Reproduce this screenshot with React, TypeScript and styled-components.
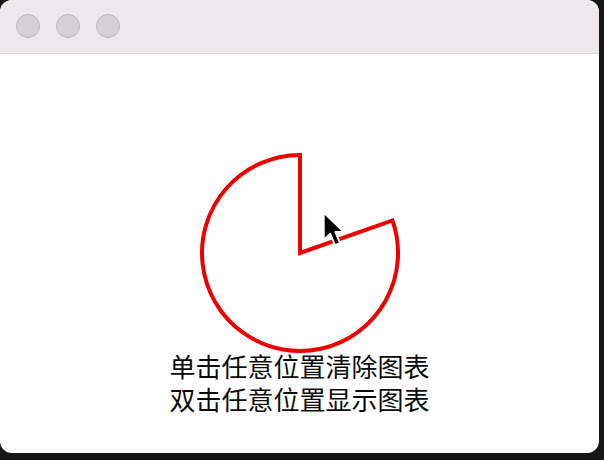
import React from "react";
import styled, { createGlobalStyle } from "styled-components";

const GlobalStyle = createGlobalStyle`
  html, body {
    margin: 0;
    padding: 0;
    background: #171717;
    width: 604px;
    height: 460px;
    overflow: hidden;
  }
`;

const Window = styled.div`
  position: relative;
  width: 599px;
  height: 453px;
  background: #ffffff;
  border-radius: 12px;
  overflow: hidden;
  display: flex;
  flex-direction: column;
`;

const TitleBar = styled.div`
  box-sizing: border-box;
  height: 54px;
  background: #ede8eb;
  border-bottom: 1px solid #dcd7da;
  display: flex;
  align-items: center;
  gap: 16px;
  padding: 0 0 1px 16px;
`;

const Light = styled.span`
  box-sizing: border-box;
  width: 24px;
  height: 24px;
  border-radius: 50%;
  background: #d6d1d5;
  border: 1px solid #bcb7bb;
`;

const Content = styled.div`
  flex: 1;
  display: flex;
  flex-direction: column;
  align-items: center;
  padding-top: 99px;
`;

const Pie = styled.svg`
  display: block;
  overflow: visible;
`;

const Caption = styled.div`
  margin-top: -2px;
  display: flex;
  flex-direction: column;
  align-items: center;
  font-family: "Noto Sans CJK SC", "Noto Sans", sans-serif;
  font-size: 26px;
  color: #0a0a0a;
`;

const Line = styled.div`
  height: 33px;
  line-height: 30px;
  white-space: nowrap;
`;

const Cursor = styled.svg`
  position: absolute;
  left: 321px;
  top: 210px;
`;

const R = 98;
const startAngle = (19.4 * Math.PI) / 180;
const sx = 100 + R * Math.cos(startAngle);
const sy = 100 - R * Math.sin(startAngle);

export default function App() {
  return (
    <>
      <GlobalStyle />
      <Window>
        <TitleBar>
          <Light />
          <Light />
          <Light />
        </TitleBar>
        <Content>
          <Pie width="200" height="200" viewBox="0 0 200 200">
            <path
              d={`M100,100 L${sx.toFixed(2)},${sy.toFixed(2)} A${R},${R} 0 1,1 100,${100 - R} Z`}
              fill="none"
              stroke="#ee0000"
              strokeWidth="4"
              strokeLinejoin="miter"
            />
          </Pie>
          <Caption>
            <Line>单击任意位置清除图表</Line>
            <Line>双击任意位置显示图表</Line>
          </Caption>
        </Content>
        <Cursor width="28" height="40" viewBox="0 0 22 32">
          <path
            d="M2,2 L2,24 L7.2,19 L11,28 L15,26.4 L11.2,17.6 L18,17.6 Z"
            fill="#000"
            stroke="#fff"
            strokeWidth="1.5"
            strokeLinejoin="round"
          />
        </Cursor>
      </Window>
    </>
  );
}
